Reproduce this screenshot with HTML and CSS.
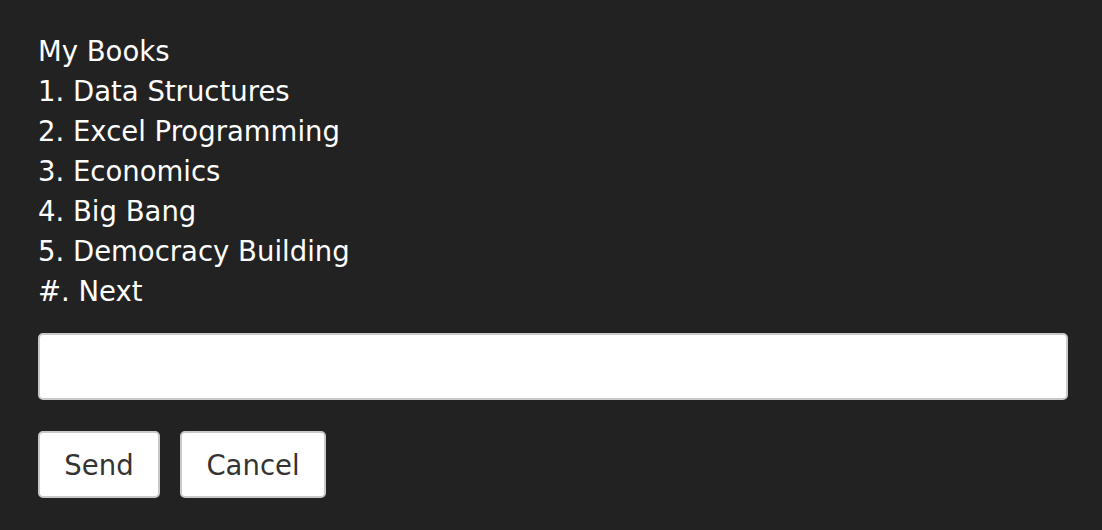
FILE: index.html
```html
<!DOCTYPE html>
<html>
<head>
<meta charset="utf-8">
<link rel="stylesheet" href="styles.css">
</head>
<body>
<div class="page">
  <div class="menu">
    <div class="line">My Books</div>
    <div class="line">1. Data Structures</div>
    <div class="line">2. Excel Programming</div>
    <div class="line">3. Economics</div>
    <div class="line">4. Big Bang</div>
    <div class="line">5. Democracy Building</div>
    <div class="line">#. Next</div>
  </div>
  <input class="field" type="text">
  <div class="actions">
    <button class="btn btn-send">Send</button>
    <button class="btn btn-cancel">Cancel</button>
  </div>
</div>
</body>
</html>
```
FILE: styles.css
```css
html, body {
  margin: 0;
  background: #222222;
}
.page {
  padding: 31px 34px 0 38px;
  font-family: "DejaVu Sans", "Open Sans", sans-serif;
}
.menu {
  color: #ffffff;
  font-size: 27.5px;
  line-height: 40px;
}
.field {
  display: block;
  box-sizing: border-box;
  width: 1030px;
  height: 67px;
  margin-top: 22px;
  border: 2px solid #c9c9c9;
  border-radius: 5px;
  background: #ffffff;
  outline: none;
}
.actions {
  display: flex;
  gap: 20px;
  margin-top: 31px;
}
.btn {
  box-sizing: border-box;
  height: 67px;
  border: 2px solid #c9c9c9;
  border-radius: 5px;
  background: #ffffff;
  color: #333333;
  font-family: inherit;
  font-size: 27.5px;
  padding: 0;
}
.btn-send { width: 122px; }
.btn-cancel { width: 146px; }
```
